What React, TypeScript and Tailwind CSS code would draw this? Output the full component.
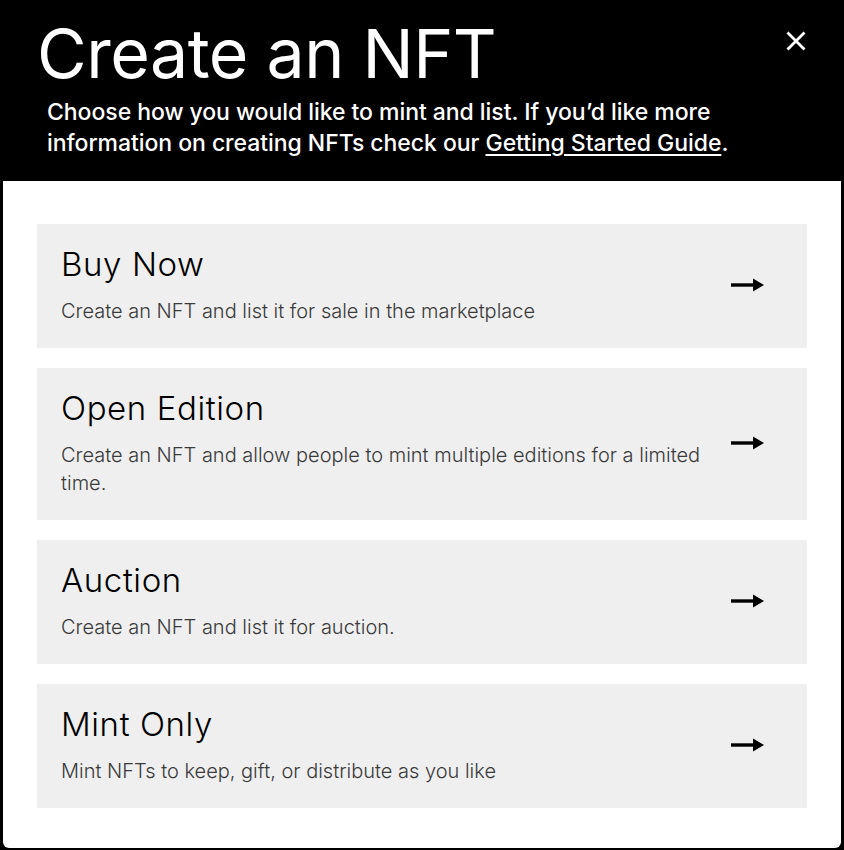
import React from "react";

type MintOption = {
  title: string;
  description: string;
};

const options: MintOption[] = [
  {
    title: "Buy Now",
    description: "Create an NFT and list it for sale in the marketplace",
  },
  {
    title: "Open Edition",
    description:
      "Create an NFT and allow people to mint multiple editions for a limited time.",
  },
  {
    title: "Auction",
    description: "Create an NFT and list it for auction.",
  },
  {
    title: "Mint Only",
    description: "Mint NFTs to keep, gift, or distribute as you like",
  },
];

function ArrowRight() {
  return (
    <svg width="34" height="16" viewBox="0 0 34 16" fill="none">
      <path d="M0 8h24" stroke="#000" strokeWidth="3.4" />
      <path d="M22 1.5 33 8l-11 6.5z" fill="#000" />
    </svg>
  );
}

function CloseIcon() {
  return (
    <svg width="20" height="20" viewBox="0 0 20 20" fill="none">
      <path d="M1.5 1.5l17 17M18.5 1.5l-17 17" stroke="#fff" strokeWidth="2.8" />
    </svg>
  );
}

function OptionCard({ option }: { option: MintOption }) {
  return (
    <button className="flex w-full items-center bg-[#efefef] pl-6 pr-[42px] pt-5 pb-[23px] text-left">
      <div className="flex-1 pr-4">
        <h2 className="text-[33px] leading-[40px] font-light tracking-[0.6px] text-black">
          {option.title}
        </h2>
        <p className="mt-[13px] text-[20px] leading-[28px] font-light text-[#3a3a3a]">
          {option.description}
        </p>
      </div>
      <ArrowRight />
    </button>
  );
}

export default function App() {
  return (
    <div
      className="min-h-[850px] bg-black px-[3px] pb-[2px]"
      style={{ fontFamily: "Inter, 'Noto Sans', sans-serif" }}
    >
      <header className="relative h-[181px] pl-[34px] pt-[13px] text-white">
        <h1 className="text-[68px] leading-[80px] font-normal tracking-[-0.5px]">
          Create an NFT
        </h1>
        <p className="mt-[4px] pl-[10px] text-[23px] leading-[31px] font-medium tracking-[-0.05px]">
          Choose how you would like to mint and list. If you’d like more
          <br />
          information on creating NFTs check our{" "}
          <a className="underline underline-offset-[3px]">Getting Started Guide</a>.
        </p>
        <button className="absolute right-[35px] top-[31px]">
          <CloseIcon />
        </button>
      </header>
      <main className="flex flex-col gap-5 rounded-b-[6px] bg-white px-[34px] pt-[43px] pb-10">
        {options.map((option) => (
          <OptionCard key={option.title} option={option} />
        ))}
      </main>
    </div>
  );
}
